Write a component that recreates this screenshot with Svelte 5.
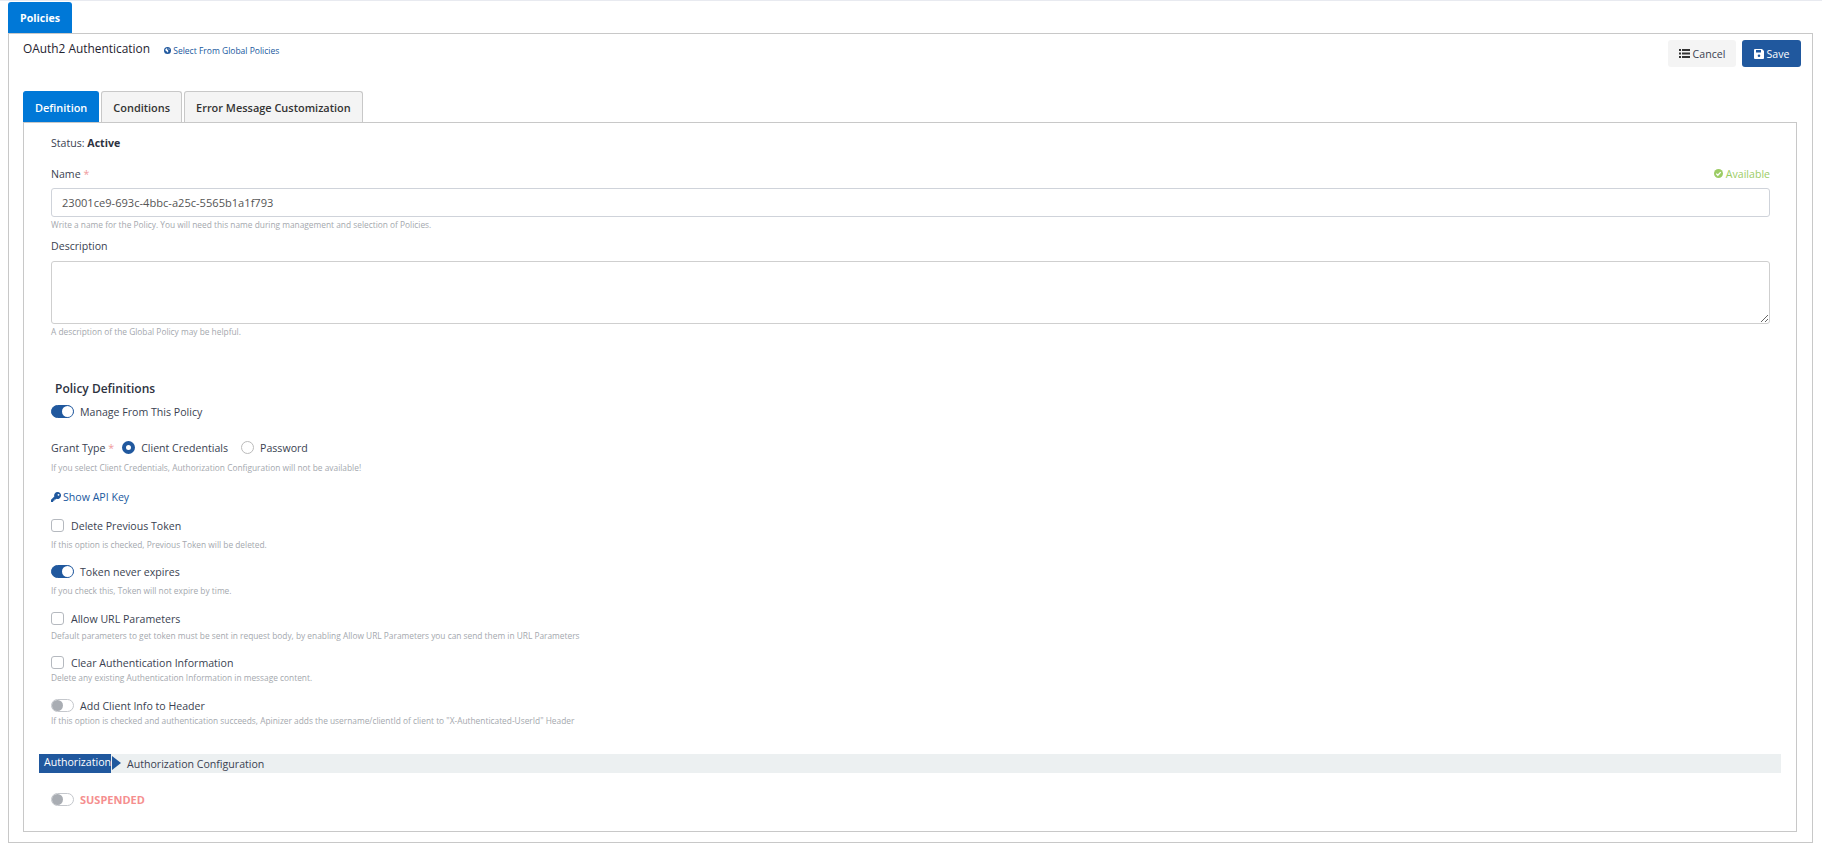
<script>
  let name = '23001ce9-693c-4bbc-a25c-5565b1a1f793';
  let grantType = 'client';
</script>

<div class="page">
  <div class="top-tabs">
    <div class="top-tab">Policies</div>
  </div>

  <div class="outer">
    <div class="head">
      <div class="title-wrap">
        <span class="title">OAuth2 Authentication</span>
        <a class="global-link" href="#global">
          <svg width="7" height="7" viewBox="0 0 16 16"><circle cx="8" cy="8" r="8" fill="#20589e"/><path d="M3 5l3-2 2 1-1 2 2 1 1 3-2 3-1-3-3-1zM11 3l2 2-1 1-2-1z" fill="#fff"/></svg>
          Select From Global Policies
        </a>
      </div>
      <div class="actions">
        <button class="btn btn-cancel">
          <svg width="11" height="9" viewBox="0 0 11 9"><path d="M0 0h2v2H0zM3 0h8v2H3zM0 3.5h2v2H0zM3 3.5h8v2H3zM0 7h2v2H0zM3 7h8v2H3z" fill="#333"/></svg>
          Cancel
        </button>
        <button class="btn btn-save">
          <svg width="10" height="10" viewBox="0 0 10 10"><path d="M1 0h7l2 2v7a1 1 0 0 1-1 1H1a1 1 0 0 1-1-1V1a1 1 0 0 1 1-1z" fill="#fff"/><path d="M2 1h5v2.5H2z" fill="#20589e"/><circle cx="5" cy="6.8" r="1.3" fill="#20589e"/></svg>
          Save
        </button>
      </div>
    </div>

    <div class="tabs">
      <div class="tab active">Definition</div>
      <div class="tab">Conditions</div>
      <div class="tab">Error Message Customization</div>
    </div>

    <div class="panel">
      <div class="status">Status: <b>Active</b></div>

      <div class="label-row name-row">
        <span>Name <i class="req">*</i></span>
        <span class="available">
          <svg width="9" height="9" viewBox="0 0 16 16"><circle cx="8" cy="8" r="8" fill="#9ccc65"/><path d="M4 8.2l2.800 2.800L12 5.600" fill="none" stroke="#fff" stroke-width="2.400"/></svg>
          Available
        </span>
      </div>
      <input class="input" type="text" value={name} />
      <div class="hint">Write a name for the Policy. You will need this name during management and selection of Policies.</div>

      <div class="label-row desc-row">Description</div>
      <textarea class="input area"></textarea>
      <div class="hint">A description of the Global Policy may be helpful.</div>

      <div class="section-title">Policy Definitions</div>

      <div class="row manage">
        <span class="toggle on"></span>
        <span>Manage From This Policy</span>
      </div>

      <div class="row grant">
        <span class="grant-label">Grant Type <i class="req">*</i></span>
        <span class="radio" class:checked={grantType === 'client'}></span>
        <span class="radio-text">Client Credentials</span>
        <span class="radio" class:checked={grantType === 'password'}></span>
        <span class="radio-text">Password</span>
      </div>
      <div class="hint grant-hint">If you select Client Credentials, Authorization Configuration will not be available!</div>

      <a class="api-key" href="#key">
        <svg width="10" height="10" viewBox="0 0 16 16"><path d="M10.500 0A5.500 5.500 0 0 0 5.300 7.200L0 12.500V16h3.500v-2h2v-2h2l1.300-1.300A5.500 5.500 0 1 0 10.500 0zm1.500 3a1.500 1.500 0 1 1 0 3 1.500 1.500 0 0 1 0-3z" fill="#20589e"/></svg>
        Show API Key
      </a>

      <div class="row check first-check"><span class="checkbox"></span><span>Delete Previous Token</span></div>
      <div class="hint opt-hint">If this option is checked, Previous Token will be deleted.</div>

      <div class="row expires"><span class="toggle on"></span><span>Token never expires</span></div>
      <div class="hint opt-hint">If you check this, Token will not expire by time.</div>

      <div class="row check url"><span class="checkbox"></span><span>Allow URL Parameters</span></div>
      <div class="hint url-hint">Default parameters to get token must be sent in request body, by enabling Allow URL Parameters you can send them in URL Parameters</div>

      <div class="row check clear"><span class="checkbox"></span><span>Clear Authentication Information</span></div>
      <div class="hint">Delete any existing Authentication Information in message content.</div>

      <div class="row client-info"><span class="toggle"></span><span>Add Client Info to Header</span></div>
      <div class="hint">If this option is checked and authentication succeeds, Apinizer adds the username/clientId of client to "X-Authenticated-UserId" Header</div>

      <div class="auth-bar">
        <span class="auth-tag">Authorization</span>
        <span class="auth-text">Authorization Configuration</span>
      </div>

      <div class="row suspended"><span class="toggle"></span><b>SUSPENDED</b></div>
    </div>
  </div>
</div>

<style>
  :global(body) {
    margin: 0;
    background: #fff;
    font-family: "Open Sans", "Noto Sans", sans-serif;
    font-size: 10.6px;
    color: #3a3f51;
  }

  .page {
    height: 846px;
    box-sizing: border-box;
    border-top: 1px solid #e8eaf0;
    padding: 1px 9px 0 8px;
  }

  .top-tabs {
    display: flex;
  }

  .top-tab {
    width: 64px;
    height: 31px;
    line-height: 33px;
    text-align: center;
    background: #0078d7;
    color: #fff;
    font-weight: 700;
    font-size: 10.6px;
    border-radius: 3px 3px 0 0;
  }

  .outer {
    height: 810px;
    box-sizing: border-box;
    border: 1px solid #c8c8c8;
    padding: 6px 15px 0 14px;
  }

  .head {
    display: flex;
    justify-content: space-between;
    height: 51px;
    margin-right: -4px;
  }

  .title-wrap {
    display: flex;
    align-items: flex-start;
    gap: 14px;
    height: 20px;
  }

  .title {
    font-size: 11.9px;
    color: #1f2430;
  }

  .global-link {
    margin-top: 5px;
    font-size: 8.5px;
    color: #20589e;
    text-decoration: none;
  }

  .actions {
    display: flex;
    gap: 6px;
  }

  .btn {
    height: 27px;
    border: none;
    border-radius: 3px;
    font-family: inherit;
    font-size: 10.6px;
    display: flex;
    align-items: center;
    justify-content: center;
    gap: 3px;
    padding: 0;
  }

  .btn-cancel {
    width: 68px;
    background: #f4f4f4;
    color: #3a3f51;
  }

  .btn-save {
    width: 59px;
    background: #20589e;
    color: #fff;
  }

  .tabs {
    display: flex;
    gap: 2px;
    height: 31px;
  }

  .tab {
    box-sizing: border-box;
    padding: 0 11px;
    line-height: 31px;
    font-weight: 600;
    font-size: 10.95px;
    color: #333;
    background: #f4f4f4;
    border: 1px solid #c8c8c8;
    border-bottom: none;
    border-radius: 3px 3px 0 0;
  }

  .tab.active {
    background: #0078d7;
    border-color: #0078d7;
    color: #fff;
  }

  .panel {
    height: 710px;
    box-sizing: border-box;
    border: 1px solid #c8c8c8;
    padding: 13px 26px 0 27px;
  }

  .status {
    height: 15px;
    line-height: 15px;
    color: #3a3f51;
  }

  .status b {
    font-weight: 700;
    color: #2d3240;
  }

  .label-row {
    line-height: 15px;
  }

  .name-row {
    display: flex;
    justify-content: space-between;
    margin-top: 16px;
    margin-bottom: 6px;
  }

  .desc-row {
    margin-top: 8px;
    margin-bottom: 7px;
  }

  .req {
    color: #f09a9a;
    font-style: normal;
  }

  .available {
    color: #9ccc65;
  }

  .input {
    display: block;
    box-sizing: border-box;
    width: 100%;
    height: 29px;
    padding: 0 10px;
    border: 1px solid #cfd3da;
    border-radius: 3px;
    font-family: inherit;
    font-size: 11.1px;
    color: #555;
    background: #fff;
    outline: none;
  }

  .area {
    height: 63px;
    resize: vertical;
    border-color: #cfcfcf;
  }

  .hint {
    font-size: 8.35px;
    line-height: 12px;
    color: #a4a8ae;
    margin-top: 2px;
  }

  .section-title {
    margin: 42px 0 0 4px;
    font-size: 12px;
    font-weight: 600;
    line-height: 18px;
    color: #2d3240;
  }

  .row {
    display: flex;
    align-items: center;
    height: 15px;
  }

  .manage {
    margin-top: 6px;
    gap: 6px;
  }

  .grant {
    margin-top: 21px;
  }

  .grant-label {
    margin-right: 8px;
  }

  .radio-text {
    margin: 0 13px 0 6px;
  }

  .radio {
    width: 13px;
    height: 13px;
    box-sizing: border-box;
    border-radius: 50%;
    border: 1px solid #bbb;
    background: #fff;
  }

  .radio.checked {
    border: 4px solid #20589e;
  }

  .grant-hint {
    margin-top: 7px;
  }

  .api-key {
    display: flex;
    align-items: center;
    gap: 2px;
    margin-top: 15px;
    height: 15px;
    color: #20589e;
    text-decoration: none;
  }

  .check {
    gap: 7px;
  }

  .first-check {
    margin-top: 14px;
  }

  .checkbox {
    width: 13px;
    height: 13px;
    box-sizing: border-box;
    border: 1px solid #b5b9bf;
    border-radius: 3px;
    background: #fff;
  }

  .opt-hint {
    margin-top: 6px;
  }

  .expires {
    gap: 6px;
    margin-top: 13px;
  }

  .url {
    margin-top: 14px;
  }

  .url-hint {
    margin-top: 4px;
  }

  .clear {
    margin-top: 13px;
  }

  .client-info {
    gap: 6px;
    margin-top: 14px;
  }

  .toggle {
    position: relative;
    width: 23px;
    height: 13px;
    box-sizing: border-box;
    border-radius: 7px;
    border: 1px solid #c4c7cc;
    background: #fff;
    flex: none;
  }

  .toggle::after {
    content: "";
    position: absolute;
    left: 0;
    top: 0;
    width: 11px;
    height: 11px;
    border-radius: 50%;
    background: #a9adb3;
  }

  .toggle.on {
    background: #20589e;
    border-color: #20589e;
  }

  .toggle.on::after {
    left: auto;
    right: 0;
    background: #fff;
  }

  .auth-bar {
    display: flex;
    align-items: center;
    height: 19px;
    margin: 27px -11px 0 -12px;
    background: #ecf0f1;
  }

  .auth-tag {
    position: relative;
    flex: none;
    width: 72px;
    height: 19px;
    line-height: 17px;
    box-sizing: border-box;
    padding-left: 5px;
    background: #20589e;
    color: #fff;
    font-size: 10.6px;
    white-space: nowrap;
  }

  .auth-tag::after {
    content: "";
    position: absolute;
    left: 73px;
    top: 2px;
    border-left: 9px solid #20589e;
    border-top: 7.500px solid transparent;
    border-bottom: 7.500px solid transparent;
  }

  .auth-text {
    margin-left: 16px;
  }

  .suspended {
    gap: 6px;
    margin-top: 19px;
  }

  .suspended b {
    color: #f58f8f;
    font-size: 11px;
    font-weight: 700;
  }
</style>
